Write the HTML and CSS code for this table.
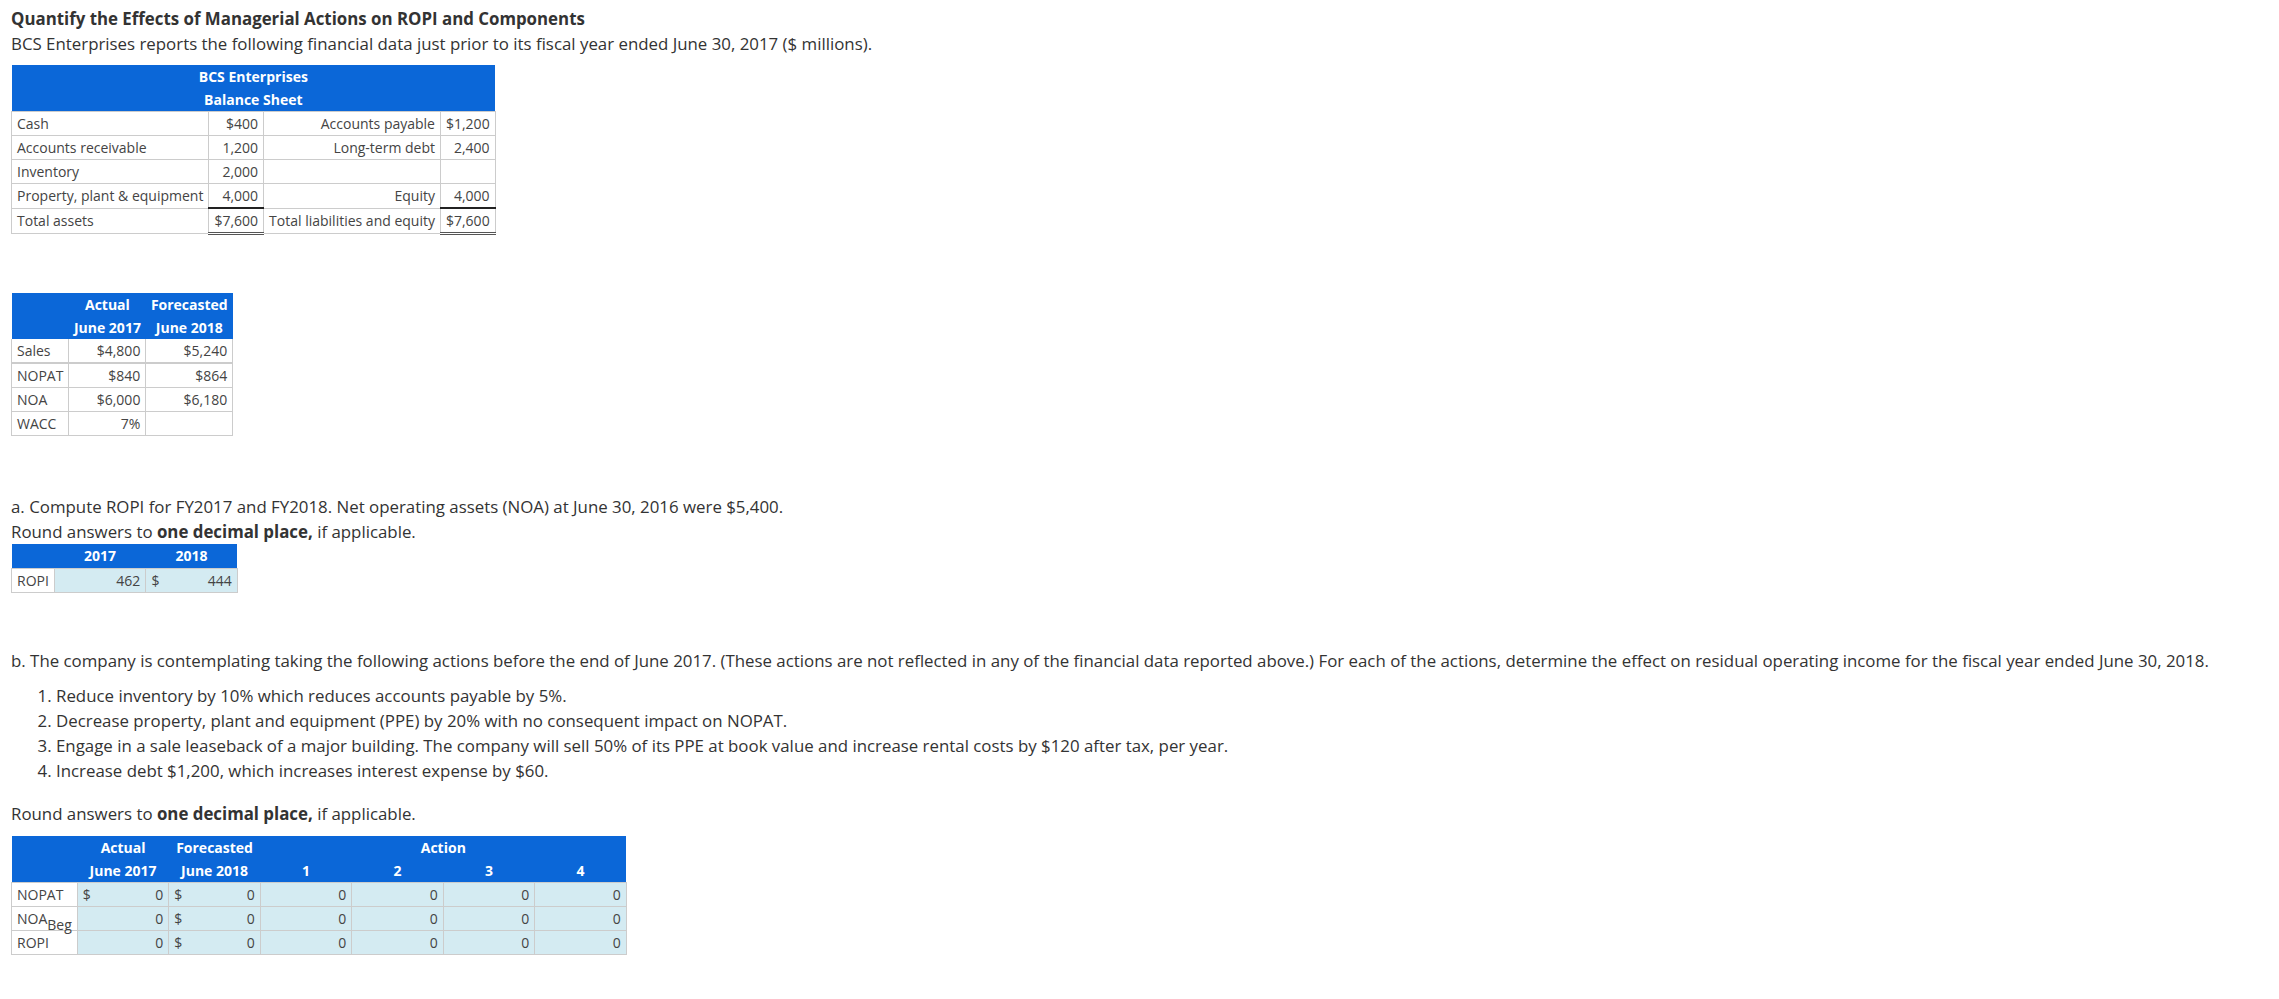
FILE: index.html
```html
<!DOCTYPE html>
<html lang="en">
<head>
    <meta charset="UTF-8">
    <meta name="viewport" content="width=device-width, initial-scale=1.0">
    <title>Quantify the Effects of Managerial Actions on ROPI and Components</title>
    <link rel="stylesheet" href="styles.css">
</head>
<body>

<div class="question">
    <p class="title">Quantify the Effects of Managerial Actions on ROPI and Components</p>
    <p>BCS Enterprises reports the following financial data just prior to its fiscal year ended June 30, 2017 ($ millions).</p>

    <!-- Balance sheet -->
    <table class="data-table balance-sheet">
        <tr>
            <th colspan="4">BCS Enterprises<br>Balance Sheet</th>
        </tr>
        <tr>
            <td class="label">Cash</td>
            <td>$400</td>
            <td>Accounts payable</td>
            <td>$1,200</td>
        </tr>
        <tr>
            <td class="label">Accounts receivable</td>
            <td>1,200</td>
            <td>Long-term debt</td>
            <td>2,400</td>
        </tr>
        <tr>
            <td class="label">Inventory</td>
            <td>2,000</td>
            <td></td>
            <td></td>
        </tr>
        <tr>
            <td class="label">Property, plant &amp; equipment</td>
            <td>4,000</td>
            <td>Equity</td>
            <td>4,000</td>
        </tr>
        <tr>
            <td class="label">Total assets</td>
            <td class="total">$7,600</td>
            <td>Total liabilities and equity</td>
            <td class="total">$7,600</td>
        </tr>
    </table>

    <!-- Actual vs forecast -->
    <table class="data-table summary">
        <tr>
            <th rowspan="2"></th>
            <th>Actual</th>
            <th>Forecasted</th>
        </tr>
        <tr>
            <th>June 2017</th>
            <th>June 2018</th>
        </tr>
        <tr class="first-row">
            <td class="label">Sales</td>
            <td>$4,800</td>
            <td>$5,240</td>
        </tr>
        <tr>
            <td class="label">NOPAT</td>
            <td>$840</td>
            <td>$864</td>
        </tr>
        <tr>
            <td class="label">NOA</td>
            <td>$6,000</td>
            <td>$6,180</td>
        </tr>
        <tr>
            <td class="label">WACC</td>
            <td>7%</td>
            <td></td>
        </tr>
    </table>

    <!-- Part a -->
    <div class="part">
        <p>a. Compute ROPI for FY2017 and FY2018. Net operating assets (NOA) at June 30, 2016 were $5,400.</p>
        <p>Round answers to <b>one decimal place,</b> if applicable.</p>
        <table class="data-table single-head">
            <tr>
                <th></th>
                <th>2017</th>
                <th>2018</th>
            </tr>
            <tr>
                <td class="label">ROPI</td>
                <td class="answer">462</td>
                <td class="answer"><span class="cur">$</span>444</td>
            </tr>
        </table>
    </div>

    <!-- Part b -->
    <div class="part part-b">
        <p>b. The company is contemplating taking the following actions before the end of June 2017. (These actions are not reflected in any of the financial data reported above.) For each of the actions, determine the effect on residual operating income for the fiscal year ended June 30, 2018.</p>
        <ol class="actions">
            <li>Reduce inventory by 10% which reduces accounts payable by 5%.</li>
            <li>Decrease property, plant and equipment (PPE) by 20% with no consequent impact on NOPAT.</li>
            <li>Engage in a sale leaseback of a major building. The company will sell 50% of its PPE at book value and increase rental costs by $120 after tax, per year.</li>
            <li>Increase debt $1,200, which increases interest expense by $60.</li>
        </ol>
        <p>Round answers to <b>one decimal place,</b> if applicable.</p>
        <table class="data-table effects">
            <tr>
                <th rowspan="2"></th>
                <th>Actual</th>
                <th>Forecasted</th>
                <th colspan="4">Action</th>
            </tr>
            <tr>
                <th>June 2017</th>
                <th>June 2018</th>
                <th>1</th>
                <th>2</th>
                <th>3</th>
                <th>4</th>
            </tr>
            <tr>
                <td class="label">NOPAT</td>
                <td class="answer"><span class="cur">$</span>0</td>
                <td class="answer"><span class="cur">$</span>0</td>
                <td class="answer">0</td>
                <td class="answer">0</td>
                <td class="answer">0</td>
                <td class="answer">0</td>
            </tr>
            <tr>
                <td class="label">NOA<span class="sub">Beg</span></td>
                <td class="answer">0</td>
                <td class="answer"><span class="cur">$</span>0</td>
                <td class="answer">0</td>
                <td class="answer">0</td>
                <td class="answer">0</td>
                <td class="answer">0</td>
            </tr>
            <tr>
                <td class="label">ROPI</td>
                <td class="answer">0</td>
                <td class="answer"><span class="cur">$</span>0</td>
                <td class="answer">0</td>
                <td class="answer">0</td>
                <td class="answer">0</td>
                <td class="answer">0</td>
            </tr>
        </table>
    </div>
</div>

</body>
</html>
```

FILE: styles.css
```css
body {
    font-family: "Open Sans", Arial, sans-serif;
    font-size: 16.85px;
    line-height: 25px;
    color: #333;
    margin: 0;
    padding: 6px 11px;
}
p {
    margin: 0;
}
.title {
    font-weight: bold;
}
.data-table {
    border-collapse: collapse;
    font-size: 14px;
    line-height: 19px;
    color: #444;
}
.data-table th {
    background-color: #0b67d8;
    color: #fff;
    font-weight: bold;
    line-height: 23px;
    padding: 0 5px;
    text-align: center;
}
.single-head th {
    line-height: 24px;
}
.data-table td {
    border: 1px solid #ccc;
    padding: 2px 5px;
    text-align: right;
    white-space: nowrap;
}
.data-table td.label {
    text-align: left;
    background-color: #fff;
}
.data-table td.total {
    border-top: 2px solid #222;
    border-bottom: 3px double #555;
}
.data-table td.answer {
    background-color: #d4ebf2;
    width: 80.5px;
}
.cur {
    float: left;
}
.sub {
    vertical-align: -6px;
    line-height: 0;
}
.balance-sheet {
    margin-top: 9px;
}
.summary {
    margin-top: 58px;
}
.summary .first-row td {
    border-top: none;
    border-bottom: 2px solid #ccc;
}
.part {
    margin-top: 58px;
}
.part-b {
    margin-top: 55px;
}
.actions {
    margin: 10px 0 18px;
    padding-left: 45px;
}
.effects {
    margin-top: 10px;
}
```
